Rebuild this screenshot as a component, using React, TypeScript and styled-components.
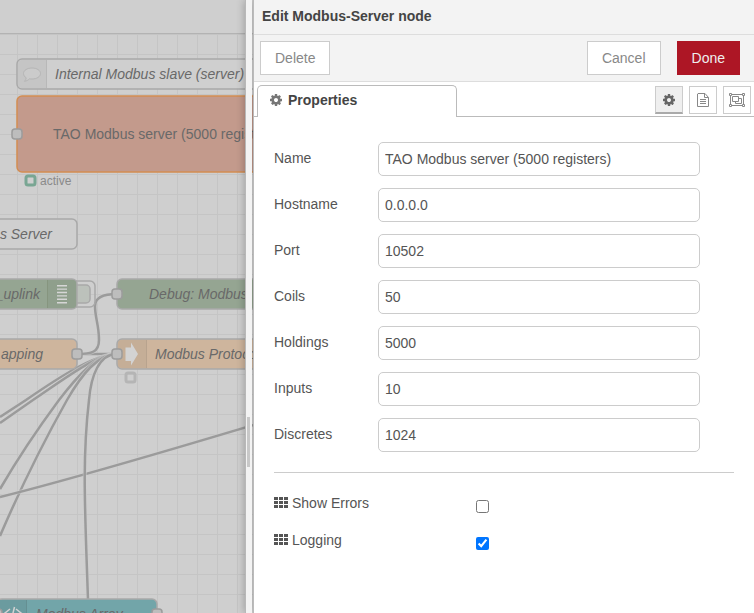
import React from "react";
import styled, { createGlobalStyle, css } from "styled-components";

const GlobalStyle = createGlobalStyle`
  * { box-sizing: border-box; }
  body {
    margin: 0;
    font: 14px/20px "Liberation Sans", Arial, sans-serif;
    color: #555;
    background: #fff;
  }
`;

const Editor = styled.div`
  display: grid;
  grid-template-columns: minmax(0, 1fr);
  min-height: 100vh;
  overflow: hidden;
`;

const Workspace = styled.main`
  grid-area: 1 / 1;
  display: flex;
  flex-direction: column;
  min-width: 0;
  background: #cfcfcf;
`;

const WorkspaceTabs = styled.div`
  height: 34px;
  flex: none;
  border-bottom: 1px solid #b3b3b3;
`;

const Flow = styled.div`
  flex: 1;
  height: 0;
  svg { display: block; width: 100%; height: 100%; }
`;

const NodeLabel = styled.text<{ $upright?: boolean }>`
  font-size: 14px;
  font-style: ${(p) => (p.$upright ? "normal" : "italic")};
  fill: #696969;
`;

const StatusLabel = styled.text`
  font-size: 12px;
  fill: #8a8a8a;
`;

const Tray = styled.aside`
  grid-area: 1 / 1;
  justify-self: end;
  z-index: 1;
  display: flex;
  width: 509px;
  max-width: 100%;
`;

const Resizer = styled.div`
  flex: none;
  width: 7px;
  margin-right: 1px;
  display: flex;
  align-items: center;
  padding: 270px 1px 0;
  background: #f3f3f3;
  border-left: 1px solid #b8b8b8;
  box-shadow: 0 0 8px rgba(0, 0, 0, 0.3);
`;

const Grip = styled.span`
  width: 3px;
  height: 50px;
  background: #c8c8c8;
`;

const Panel = styled.section`
  flex: 1;
  min-width: 0;
  background: #fff;
  border-left: 1px solid #bbb;
`;

const Title = styled.h1`
  margin: 0;
  height: 35px;
  padding: 6px 8px;
  font-size: 14px;
  line-height: 20px;
  color: #444;
  background: #f3f3f3;
  border-bottom: 1px solid #ddd;
`;

const Toolbar = styled.div`
  display: flex;
  align-items: center;
  gap: 16px;
  height: 47px;
  padding: 0 14px 0 6px;
  background: #f3f3f3;
  border-bottom: 1px solid #ddd;
`;

const Button = styled.button<{ $primary?: boolean; $first?: boolean }>`
  height: 34px;
  padding: 0 14px;
  font: inherit;
  color: ${(p) => (p.$primary ? "#eee" : "#888")};
  background: ${(p) => (p.$primary ? "#ad1625" : "#fff")};
  border: 1px solid ${(p) => (p.$primary ? "#ad1625" : "#ccc")};
  ${(p) => p.$first && css`margin-right: auto;`}
`;

const TabBar = styled.div`
  display: flex;
  align-items: flex-end;
  height: 35px;
`;

const TabLine = styled.div<{ $grow?: boolean }>`
  flex: ${(p) => (p.$grow ? "1" : "0 0 3px")};
  align-self: stretch;
  display: flex;
  align-items: flex-end;
  justify-content: flex-end;
  gap: 6px;
  padding: ${(p) => (p.$grow ? "0 3px 2px 0" : "0")};
  border-bottom: 1px solid #bbb;
`;

const Tab = styled.button`
  display: flex;
  align-items: center;
  gap: 6px;
  width: 200px;
  height: 32px;
  padding: 0 12px 4px;
  font: inherit;
  font-weight: bold;
  color: #444;
  background: #fff;
  border: 1px solid #bbb;
  border-bottom: 0;
  border-radius: 5px 5px 0 0;
  svg { color: #777; }
`;

const IconButton = styled.button<{ $active?: boolean }>`
  display: flex;
  align-items: center;
  justify-content: center;
  width: 28px;
  height: 28px;
  padding: 0;
  color: ${(p) => (p.$active ? "#666" : "#888")};
  background: ${(p) => (p.$active ? "#efefef" : "#fff")};
  border: 1px solid #ccc;
  ${(p) => p.$active && css`border-bottom: 2px solid #aaa;`}
`;

const Form = styled.form`
  padding: 25px 20px;
`;

const Row = styled.div`
  display: flex;
  gap: 4px;
  margin-bottom: 12px;
`;

const Label = styled.label`
  flex: 0 0 100px;
  padding-top: 6px;
`;

const TextInput = styled.input`
  width: 70%;
  min-width: 0;
  height: 34px;
  padding: 0 6px;
  font: inherit;
  color: #555;
  background: #fff;
  border: 1px solid #ccc;
  border-radius: 5px;
`;

const Divider = styled.hr`
  margin: 20px 0;
  border: 0;
  border-top: 1px solid #ccc;
`;

const CheckRow = styled.div`
  display: flex;
  align-items: flex-start;
  margin-bottom: 17px;
`;

const CheckLabel = styled.label`
  display: flex;
  align-items: center;
  gap: 4px;
  width: 202px;
`;

const CheckBox = styled.input`
  width: 13px;
  height: 13px;
  margin: 7px 0 0;
`;

const Cog = () => (
  <svg width="12" height="14" viewBox="0 -1536 1536 1792" fill="currentColor" aria-hidden="true">
    <path
      transform="scale(1 -1)"
      d="M1024 640q0 106 -75 181t-181 75t-181 -75t-75 -181t75 -181t181 -75t181 75t75 181zM1536 749v-222q0 -12 -8 -23t-20 -13l-185 -28q-19 -54 -39 -91q35 -50 107 -138q10 -12 10 -25t-9 -23q-27 -37 -99 -108t-94 -71q-12 0 -26 9l-138 108q-44 -23 -91 -38q-16 -136 -29 -186q-7 -28 -36 -28h-222q-14 0 -24.5 8.5t-11.5 21.5l-28 184q-49 16 -90 37l-141 -107q-10 -9 -25 -9q-14 0 -25 11q-126 114 -165 168q-7 10 -7 23q0 12 8 23q15 21 51 66.5t54 70.5q-27 50 -41 99l-183 27q-13 2 -21 12.5t-8 23.5v222q0 12 8 23t19 13l186 28q14 46 39 92q-40 57 -107 138q-10 12 -10 24q0 10 9 23q26 36 98.5 107.5t94.5 71.5q13 0 26 -10l138 -107q44 23 91 38q16 136 29 186q7 28 36 28h222q14 0 24.5 -8.5t11.5 -21.5l28 -184q49 -16 90 -37l142 107q9 9 24 9q13 0 25 -10q129 -119 165 -170q7 -8 7 -22q0 -12 -8 -23q-15 -21 -51 -66.5t-54 -70.5q26 -50 41 -98l183 -28q13 -2 21 -12.5t8 -23.5z"
    />
  </svg>
);

const FileText = () => (
  <svg width="12" height="14" viewBox="0 0 12 14" fill="none" stroke="currentColor" aria-hidden="true">
    <path d="M.5 1V13.5H11.5V4.5L8 .5H1Z M7.5 .5V4.5H11.5 M3 6.5H9 M3 8.5H9 M3 10.5H9" />
  </svg>
);

const ObjectGroup = () => (
  <svg width="16" height="14" viewBox="0 0 16 14" fill="none" stroke="currentColor" aria-hidden="true">
    <path d="M3 1.5H13 M3 12.5H13 M1.5 3V11 M14.5 3V11" />
    <path d="M.5 .5h2v2h-2z M13.5 .5h2v2h-2z M.5 11.5h2v2h-2z M13.5 11.5h2v2h-2z" />
    <path d="M3.5 3.5H9.5V8.5H3.5Z M9.5 5.5H12.5V10.5H6.5V8.5" />
  </svg>
);

const Th = () => (
  <svg width="14" height="12" viewBox="0 0 14 12" fill="currentColor" aria-hidden="true">
    {[0, 4, 8].map((y) => [0, 5, 10].map((x) => <rect key={`${x}-${y}`} x={x} y={y} width="4" height="3" />))}
  </svg>
);

const Port = ({ x, y }: { x: number; y: number }) => (
  <rect x={x - 5} y={y - 5} width="10" height="10" rx="3" fill="#bdbdbd" stroke="#9c9c9c" strokeWidth="1.5" />
);

type NodeProps = { x: number; y: number; w: number; h?: number; fill: string; stroke?: string };
const NodeBox = ({ x, y, w, h = 30, fill, stroke = "#a9a9a9" }: NodeProps) => (
  <rect x={x} y={y} width={w} height={h} rx="5" fill={fill} stroke={stroke} strokeWidth="1.5" />
);

const wires = [
  "M77 354H117",
  "M117 354C94 354 55 380 26 400L0 417",
  "M117 354C96 354 60 382 33 400L0 423",
  "M117 354C96 354 76 378 59 400Q25 446 0 489",
  "M117 354C98 354 82 374 67 400Q30 466 0 536",
  "M0 497C80 477 170 450 260 423",
  "M117 354C99 354 91 376 89 400C82 460 85 510 88 600",
  "M77 354C92 354 99 352 99 340C99 325 95 318 95 306C95 298 102 294 117 294",
];

const FlowDiagram = () => (
  <svg aria-label="Flow">
    <defs>
      <pattern id="grid" x="17" y="20" width="20" height="20" patternUnits="userSpaceOnUse">
        <path d="M.5 0V20M0 .5H20" stroke="#c5c5c5" fill="none" />
      </pattern>
    </defs>
    <rect width="100%" height="100%" fill="url(#grid)" />
    <g transform="translate(0 -34)">
      {wires.map((d) => (
        <g key={d} fill="none">
          <path d={d} stroke="#cfcfcf" strokeWidth="4" strokeOpacity=".6" />
          <path d={d} stroke="#9b9b9b" strokeWidth="2.5" />
        </g>
      ))}

      <NodeBox x={17} y={59} w={300} fill="#cfcfcf" />
      <path d="M22 60H46V88H22Q18 88 18 84V64Q18 60 22 60Z" fill="#c5c5c5" />
      <path d="M46.5 60V88" stroke="#b8b8b8" />
      <path d="M32 68c5 0 8.5 2.5 8.5 5.500s-3.500 5.500-8.500 5.500c-1 0-1.500 0-2.500-.2-1.500 1.500-3 2.200-5 2.500 1-1 1.500-2 1.700-3.500-1.700-1-2.700-2.500-2.700-4.300 0-3 3.500-5.500 8.500-5.500z" fill="#cbcbcb" stroke="#b5b5b5" />
      <NodeLabel x="55" y="79">Internal Modbus slave (server) :</NodeLabel>

      <NodeBox x={17} y={96} w={300} h={76} fill="#c39a8c" stroke="#d38d52" />
      <Port x={17} y={134} />
      <NodeLabel $upright x="53" y="139">TAO Modbus server (5000 registers)</NodeLabel>
      <rect x="26" y="176" width="9" height="9" rx="2" fill="none" stroke="#79a693" strokeWidth="3" />
      <StatusLabel x="40" y="185">active</StatusLabel>

      <NodeBox x={-80} y={219} w={157} fill="#cfcfcf" />
      <NodeLabel x="52" y="239" textAnchor="end">s Server</NodeLabel>

      <rect x="60" y="281" width="35" height="26" rx="5" fill="none" stroke="#a9a9a9" strokeWidth="1.5" />
      <rect x="60" y="285" width="30" height="18" rx="4" fill="#bcc1bb" stroke="#a9a9a9" strokeWidth="1.5" />
      <NodeBox x={-80} y={279} w={157} fill="#95a592" />
      <path d="M48 280H73Q76 280 76 283V305Q76 308 73 308H48Z" fill="#8f9f8c" />
      <path d="M47.5 280V308" stroke="#86957f" />
      <path d="M57 285.7H67M57 289.1H67M57 292.5H67M57 295.9H67M57 299.3H67M57 302.7H67" stroke="#d6d6d6" strokeWidth="1.4" />
      <NodeLabel x="40" y="299" textAnchor="end">_uplink</NodeLabel>

      <NodeBox x={117} y={279} w={200} fill="#95a592" />
      <Port x={117} y={294} />
      <NodeLabel x="149" y="299">Debug: Modbus</NodeLabel>

      <NodeBox x={-80} y={339} w={157} fill="#ceb59d" />
      <Port x={77} y={354} />
      <NodeLabel x="43" y="359" textAnchor="end">apping</NodeLabel>

      <NodeBox x={117} y={339} w={200} fill="#ceb59d" />
      <path d="M122 340H146V368H122Q118 368 118 364V344Q118 340 122 340Z" fill="#c5ae97" />
      <path d="M146.5 340V368" stroke="#b8a38e" />
      <path d="M125.500 347.500H131V342.500L138 354L131 365.500V361H125.500Z" fill="#d3d3d3" />
      <Port x={117} y={354} />
      <NodeLabel x="155" y="359">Modbus Protocol</NodeLabel>
      <rect x="126" y="373" width="9" height="9" rx="2" fill="none" stroke="#b5b5b5" strokeWidth="3" />

      <NodeBox x={-3} y={599} w={160} fill="#72a5a9" />
      <path d="M0 600H26V628H0Z" fill="#6b9b9f" />
      <path d="M26.5 600V628" stroke="#658f92" />
      <path d="M10 609L5 613L10 617M16 609L21 613L16 617M14.500 607L11.500 619" fill="none" stroke="#d3d3d3" strokeWidth="1.5" />
      <Port x={-3} y={614} />
      <Port x={157} y={614} />
      <NodeLabel x="36" y="619">Modbus Array</NodeLabel>
    </g>
  </svg>
);

const fields = [
  { id: "name", label: "Name", value: "TAO Modbus server (5000 registers)" },
  { id: "hostname", label: "Hostname", value: "0.0.0.0" },
  { id: "port", label: "Port", value: "10502" },
  { id: "coils", label: "Coils", value: "50" },
  { id: "holdings", label: "Holdings", value: "5000" },
  { id: "inputs", label: "Inputs", value: "10" },
  { id: "discretes", label: "Discretes", value: "1024" },
];

const options = [
  { id: "show-errors", label: "Show Errors", checked: false },
  { id: "logging", label: "Logging", checked: true },
];

export default function App() {
  return (
    <>
      <GlobalStyle />
      <Editor>
        <Workspace>
          <WorkspaceTabs />
          <Flow><FlowDiagram /></Flow>
        </Workspace>
        <Tray>
          <Resizer><Grip /></Resizer>
          <Panel>
            <Title>Edit Modbus-Server node</Title>
            <Toolbar>
              <Button type="button" $first>Delete</Button>
              <Button type="button">Cancel</Button>
              <Button type="button" $primary>Done</Button>
            </Toolbar>
            <TabBar>
              <TabLine />
              <Tab type="button"><Cog />Properties</Tab>
              <TabLine $grow>
                <IconButton type="button" $active aria-label="Properties"><Cog /></IconButton>
                <IconButton type="button" aria-label="Description"><FileText /></IconButton>
                <IconButton type="button" aria-label="Appearance"><ObjectGroup /></IconButton>
              </TabLine>
            </TabBar>
            <Form>
              {fields.map((f) => (
                <Row key={f.id}>
                  <Label htmlFor={f.id}>{f.label}</Label>
                  <TextInput id={f.id} type="text" defaultValue={f.value} />
                </Row>
              ))}
              <Divider />
              {options.map((o) => (
                <CheckRow key={o.id}>
                  <CheckLabel htmlFor={o.id}><Th />{o.label}</CheckLabel>
                  <CheckBox id={o.id} type="checkbox" defaultChecked={o.checked} />
                </CheckRow>
              ))}
            </Form>
          </Panel>
        </Tray>
      </Editor>
    </>
  );
}
